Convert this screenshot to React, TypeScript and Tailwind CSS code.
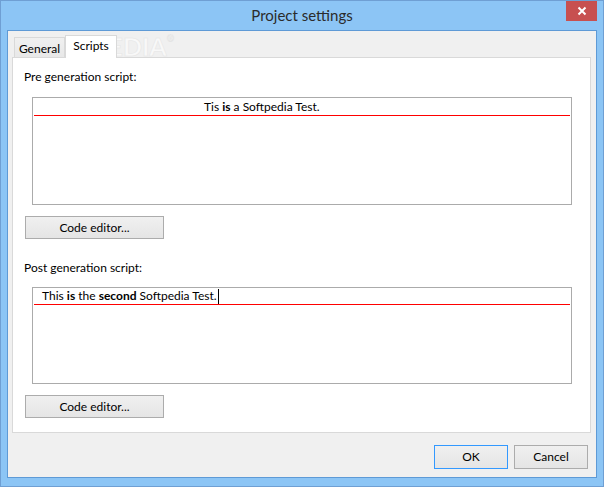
import React from "react";

const font = { fontFamily: "Lato, 'Open Sans', sans-serif" };

function WinButton({ label, focused, className }: { label: string; focused?: boolean; className?: string }) {
  return (
    <div
      className={
        "flex items-center justify-center text-[12px] text-black bg-gradient-to-b from-[#f0f0f0] to-[#e5e5e5] border " +
        (focused ? "border-[#3399ff] " : "border-[#acacac] ") +
        (className ?? "")
      }
    >
      {label}
    </div>
  );
}

function ScriptBox({
  children,
  height,
  rowHeight,
  indent,
  cursor,
}: {
  children: React.ReactNode;
  height: string;
  rowHeight: string;
  indent: string;
  cursor?: boolean;
}) {
  return (
    <div className={"ml-[19px] w-[540px] bg-white border border-[#ababab] flex flex-col " + height}>
      <div className={"flex items-center text-[12px] text-black whitespace-nowrap " + rowHeight + " " + indent}>
        {children}
        {cursor && <span className="inline-block w-px h-[15px] bg-black ml-[1px]" />}
      </div>
      <div className="mx-[1px] h-px bg-[#ff0000]" />
    </div>
  );
}

export default function App() {
  return (
    <div
      className="w-[604px] h-[487px] bg-[#8cc5f5] border border-[#6f9fd3] flex flex-col relative overflow-hidden"
      style={font}
    >
      {/* title bar */}
      <div className="h-[29px] flex items-center justify-center text-[15px] text-[#2b2b2b] pb-[1px]">
        Project settings
      </div>
      <div className="absolute top-0 right-[6px] w-[31px] h-[20px] bg-[#c75050] flex items-center justify-center">
        <svg width="10" height="10" viewBox="0 0 10 10">
          <path d="M1.5 1.5 L8.5 8.5 M8.5 1.5 L1.5 8.5" stroke="white" strokeWidth="2" />
        </svg>
      </div>

      {/* client */}
      <div className="mx-[6px] mb-[8px] flex-1 bg-[#f0f0f0] border border-[#5e9ad6] flex flex-col pt-[4px] pl-[4px] pr-[5px] pb-[8px] relative">
        {/* watermark, sits behind the tabs */}
        <div className="absolute left-[22px] top-[3px] z-0 text-[25px] font-bold text-white/60 [-webkit-text-stroke:0.5px_#e4e4e4] pointer-events-none select-none leading-none">
          SOFTPEDIA<span className="text-[9px] align-top">®</span>
        </div>

        <div className="h-[22px] flex items-end relative z-10 text-[12px] text-black">
          <div className="ml-[2px] w-[51px] h-[20px] border border-b-0 border-[#d9d9d9] bg-gradient-to-b from-[#f0f0f0] to-[#e8e8e8] flex items-center justify-center pt-[2px]">
            General
          </div>
          <div className="w-[52px] h-[23px] translate-y-[1px] border border-b-0 border-[#d9d9d9] bg-white flex items-start justify-center pt-[1px]">
            Scripts
          </div>
        </div>

        <div className="h-[376px] bg-white border border-[#d9d9d9] flex flex-col">
          <div className="mt-[11px] pl-[11px] h-[16px] leading-[16px] text-[12px] text-black">Pre generation script:</div>
          <div className="mt-[12px]">
            <ScriptBox height="h-[108px]" rowHeight="h-[17px]" indent="pl-[171px]">
              Tis&nbsp;<b>is</b>&nbsp;a Softpedia Test.
            </ScriptBox>
          </div>
          <WinButton label="Code editor..." className="mt-[11px] ml-[12px] w-[139px] h-[23px]" />

          <div className="mt-[21px] pl-[11px] h-[16px] leading-[16px] text-[12px] text-black">Post generation script:</div>
          <div className="mt-[11px]">
            <ScriptBox height="h-[97px]" rowHeight="h-[16px]" indent="pl-[9px]" cursor>
              This&nbsp;<b>is</b>&nbsp;the&nbsp;<b>second</b>&nbsp;Softpedia Test.
            </ScriptBox>
          </div>
          <WinButton label="Code editor..." className="mt-[11px] ml-[12px] w-[139px] h-[23px]" />
        </div>

        <div className="mt-[12px] flex justify-end gap-[6px] pr-[3px]">
          <WinButton label="OK" focused className="w-[74px] h-[24px]" />
          <WinButton label="Cancel" className="w-[74px] h-[24px]" />
        </div>
      </div>
    </div>
  );
}
